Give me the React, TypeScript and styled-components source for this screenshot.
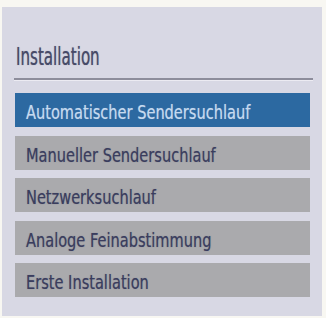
import React from "react";
import styled, { createGlobalStyle } from "styled-components";

const Global = createGlobalStyle`
  html, body {
    margin: 0;
    padding: 0;
    background: #f8f7f2;
  }
  body {
    font-family: "DejaVu Sans Condensed", "DejaVu Sans", "Liberation Sans", sans-serif;
  }
`;

const Screen = styled.div`
  width: 326px;
  height: 318px;
  padding: 7px 4px 2px 2px;
  box-sizing: border-box;
  background: #f8f7f2;
`;

const Panel = styled.div`
  height: 100%;
  box-sizing: border-box;
  background: #d8d8e4;
  padding: 38px 12px 0 13px;
  display: flex;
  flex-direction: column;
`;

const Title = styled.div`
  font-size: 24px;
  line-height: 24px;
  color: #474a68;
  padding-left: 1px;
  white-space: nowrap;
  text-shadow: 0 0 1px rgba(70, 72, 100, 0.6);
`;

const Squeeze = styled.span<{ $x: number }>`
  display: inline-block;
  transform: scaleX(${(p) => p.$x});
  transform-origin: left center;
`;

const Divider = styled.div`
  margin: 9px -3px 0 -1px;
  height: 2px;
  background: #8d8d9b;
  border-bottom: 1px solid #ecebf2;
`;

const Menu = styled.div`
  margin-top: 12px;
  display: flex;
  flex-direction: column;
  gap: 8.5px;
`;

const Row = styled.div<{ $active?: boolean }>`
  height: 34px;
  box-sizing: border-box;
  padding: 5px 0 0 11px;
  line-height: 29px;
  font-size: 20px;
  background: ${(p) => (p.$active ? "#2c69a1" : "#aaaaad")};
  color: ${(p) => (p.$active ? "#c6daef" : "#3a3d5e")};
  text-shadow: 0 0 1px ${(p) => (p.$active ? "rgba(198,218,239,0.5)" : "rgba(58,61,94,0.5)")};
  white-space: nowrap;
`;

const items = [
  "Automatischer Sendersuchlauf",
  "Manueller Sendersuchlauf",
  "Netzwerksuchlauf",
  "Analoge Feinabstimmung",
  "Erste Installation",
];

export default function App() {
  return (
    <>
      <Global />
      <Screen>
        <Panel>
          <Title>
            <Squeeze $x={0.7}>Installation</Squeeze>
          </Title>
          <Divider />
          <Menu>
            {items.map((t, i) => (
              <Row key={t} $active={i === 0}>
                <Squeeze $x={0.81}>{t}</Squeeze>
              </Row>
            ))}
          </Menu>
        </Panel>
      </Screen>
    </>
  );
}
